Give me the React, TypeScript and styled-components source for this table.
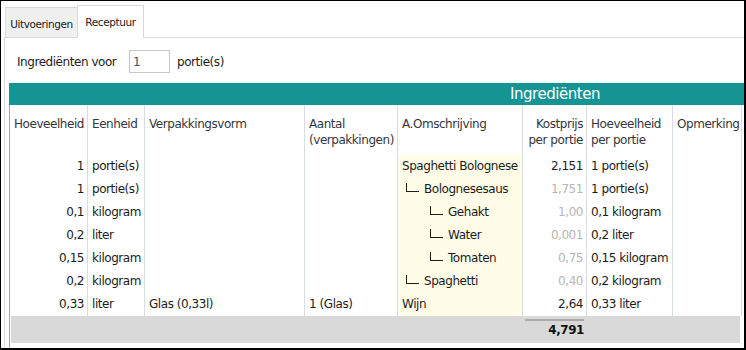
import React from 'react';
import styled, { createGlobalStyle } from 'styled-components';

const GlobalStyle = createGlobalStyle`
  html, body {
    margin: 0;
    padding: 0;
    background: #fff;
  }

  body {
    font-family: "DejaVu Sans", Tahoma, sans-serif;
    color: #1c1c1c;
  }
`;

const COLUMNS = '78px 57px 160px 93px 125px 64px 86px 69px 1fr';

const Frame = styled.div`
  width: 746px;
  height: 350px;
  box-sizing: border-box;
  border: 1px solid #000;
  border-right-width: 2px;
  border-bottom-width: 2px;
  background: #fff;
  overflow: hidden;
  padding: 4px 0 0 3px;
  display: flex;
  flex-direction: column;
`;

const TabStrip = styled.div`
  display: flex;
  align-items: flex-end;
  height: 32px;
  padding-left: 1px;
`;

const Tab = styled.div<{ $active?: boolean }>`
  box-sizing: border-box;
  display: flex;
  align-items: center;
  justify-content: center;
  font-size: 10.5px;
  letter-spacing: -0.4px;
  color: #1a1a1a;
  border: 1px solid #d9d9d9;
  border-bottom: none;
  position: relative;
  z-index: 1;
  ${({ $active }) =>
    $active
      ? `
    width: 67px;
    height: 33px;
    margin-bottom: -1px;
    background: #fff;
  `
      : `
    width: 72px;
    height: 30px;
    padding-top: 2px;
    border-right: none;
    background: #f0f0f0;
  `}
`;

const Panel = styled.div`
  flex: 1;
  display: flex;
  flex-direction: column;
  border-top: 1px solid #dadada;
  border-left: 1px solid #dadada;
  min-height: 0;
`;

const PortionRow = styled.div`
  display: flex;
  align-items: center;
  height: 23px;
  margin: 12px 0 0 12px;
  font-size: 12px;
  letter-spacing: -0.45px;
`;

const PortionLabel = styled.span`
  width: 112px;
`;

const PortionInput = styled.input`
  box-sizing: border-box;
  width: 41px;
  height: 23px;
  border: 1px solid #c8c8c8;
  padding: 0 3px;
  font-family: inherit;
  font-size: 12px;
  color: #4a4a58;
  outline: none;
`;

const PortionUnit = styled.span`
  margin-left: 7px;
`;

const GridArea = styled.div`
  flex: 1;
  margin: 10px 0 0 4px;
  overflow: hidden;
  display: flex;
  flex-direction: column;
`;

const Band = styled.div`
  width: 1092px;
  height: 22px;
  flex-shrink: 0;
  background: #169494;
  color: #fff;
  font-size: 15px;
  letter-spacing: -0.45px;
  line-height: 22px;
  text-align: center;
`;

const GridBody = styled.div`
  flex: 1;
  width: 1083px;
  border-left: 1px solid #a4a4a4;
  font-size: 12px;
  letter-spacing: -0.45px;
`;

const Row = styled.div<{ $header?: boolean }>`
  display: grid;
  grid-template-columns: ${COLUMNS};
  height: ${({ $header }) => ($header ? '50px' : '23px')};
  line-height: ${({ $header }) => ($header ? '16px' : '23px')};
  color: ${({ $header }) => ($header ? '#35353d' : '#1c1c1c')};
`;

const Cell = styled.div<{ $right?: boolean; $note?: boolean; $muted?: boolean; $header?: boolean }>`
  box-sizing: border-box;
  border-right: 1px solid #d6dde7;
  padding: ${({ $header }) => ($header ? '11px 3px 0 4px' : '0 3px 0 4px')};
  text-align: ${({ $right }) => ($right ? 'right' : 'left')};
  white-space: nowrap;
  overflow: hidden;
  background: ${({ $note }) => ($note ? '#fffde7' : 'transparent')};
  color: ${({ $muted }) => ($muted ? '#b6b6b6' : 'inherit')};
`;

// tree connector in front of nested recipe parts
const Branch = styled.span<{ $level: number }>`
  display: inline-block;
  box-sizing: border-box;
  width: 13px;
  height: 9px;
  margin-left: ${({ $level }) => 4 + ($level - 1) * 24}px;
  margin-right: 5px;
  vertical-align: 1px;
  border-left: 1px solid #1c1c1c;
  border-bottom: 1px solid #1c1c1c;
`;

const Footer = styled.div`
  display: grid;
  grid-template-columns: 512px 64px 1fr;
  width: 729px;
  height: 27px;
  margin-left: 1px;
  background: #d9d9d9;
`;

const Total = styled.div`
  margin-top: 3px;
  padding: 0 3px 0 2px;
  text-align: right;
  font-weight: bold;
  line-height: 18px;
  color: #111;

  &::before {
    content: '';
    display: block;
    height: 2px;
    background: #a9a9a9;
  }
`;

type Ingredient = {
  qty: string;
  unit: string;
  pack?: string;
  count?: string;
  name: string;
  level: number;
  cost: string;
  muted?: boolean;
  perPortion: string;
};

const ingredients: Ingredient[] = [
  { qty: '1', unit: 'portie(s)', name: 'Spaghetti Bolognese', level: 0, cost: '2,151', perPortion: '1 portie(s)' },
  { qty: '1', unit: 'portie(s)', name: 'Bolognesesaus', level: 1, cost: '1,751', muted: true, perPortion: '1 portie(s)' },
  { qty: '0,1', unit: 'kilogram', name: 'Gehakt', level: 2, cost: '1,00', muted: true, perPortion: '0,1 kilogram' },
  { qty: '0,2', unit: 'liter', name: 'Water', level: 2, cost: '0,001', muted: true, perPortion: '0,2 liter' },
  { qty: '0,15', unit: 'kilogram', name: 'Tomaten', level: 2, cost: '0,75', muted: true, perPortion: '0,15 kilogram' },
  { qty: '0,2', unit: 'kilogram', name: 'Spaghetti', level: 1, cost: '0,40', muted: true, perPortion: '0,2 kilogram' },
  {
    qty: '0,33',
    unit: 'liter',
    pack: 'Glas (0,33l)',
    count: '1 (Glas)',
    name: 'Wijn',
    level: 0,
    cost: '2,64',
    perPortion: '0,33 liter',
  },
];

const App: React.FC = () => {
  return (
    <Frame>
      <GlobalStyle />
      <TabStrip>
        <Tab>Uitvoeringen</Tab>
        <Tab $active>Receptuur</Tab>
      </TabStrip>

      <Panel>
        <PortionRow>
          <PortionLabel>Ingrediënten voor</PortionLabel>
          <PortionInput defaultValue="1" />
          <PortionUnit>portie(s)</PortionUnit>
        </PortionRow>

        <GridArea>
          <Band>Ingrediënten</Band>
          <GridBody>
            <Row $header>
              <Cell $header>Hoeveelheid</Cell>
              <Cell $header>Eenheid</Cell>
              <Cell $header>Verpakkingsvorm</Cell>
              <Cell $header>
                Aantal
                <br />
                (verpakkingen)
              </Cell>
              <Cell $header>A.Omschrijving</Cell>
              <Cell $header $right>
                Kostprijs
                <br />
                per portie
              </Cell>
              <Cell $header>
                Hoeveelheid
                <br />
                per portie
              </Cell>
              <Cell $header>Opmerking</Cell>
              <Cell $header />
            </Row>

            {ingredients.map((item) => (
              <Row key={item.name}>
                <Cell $right>{item.qty}</Cell>
                <Cell>{item.unit}</Cell>
                <Cell>{item.pack}</Cell>
                <Cell>{item.count}</Cell>
                <Cell $note>
                  {item.level > 0 && <Branch $level={item.level} />}
                  {item.name}
                </Cell>
                <Cell $right $muted={item.muted}>
                  {item.cost}
                </Cell>
                <Cell>{item.perPortion}</Cell>
                <Cell />
                <Cell />
              </Row>
            ))}

            <Footer>
              <div />
              <Total>4,791</Total>
              <div />
            </Footer>
          </GridBody>
        </GridArea>
      </Panel>
    </Frame>
  );
};

export default App;
